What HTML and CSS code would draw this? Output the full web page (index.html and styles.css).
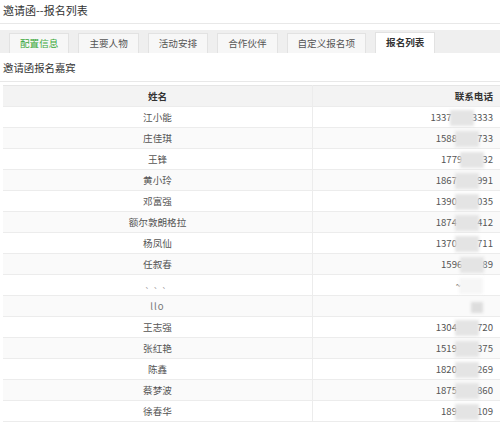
FILE: index.html
```html
<!DOCTYPE html>
<html lang="zh-CN">
<head>
  <meta charset="UTF-8">
  <meta name="viewport" content="width=device-width, initial-scale=1.0">
  <title>邀请函--报名列表</title>
  <link rel="stylesheet" href="styles.css">
</head>
<body>
  <div class="title">邀请函--报名列表</div>

  <!-- 选项卡 -->
  <div class="tabs">
    <div class="tab green">配置信息</div>
    <div class="tab">主要人物</div>
    <div class="tab">活动安排</div>
    <div class="tab">合作伙伴</div>
    <div class="tab">自定义报名项</div>
    <div class="tab active">报名列表</div>
  </div>

  <div class="subtitle">邀请函报名嘉宾</div>

  <table class="list">
    <thead>
      <tr><th class="name">姓名</th><th class="phone">联系电话</th></tr>
    </thead>
    <tbody>
      <tr><td class="name">江小能</td><td class="phone">1337<span class="mask"></span>3333</td></tr>
      <tr><td class="name">庄佳琪</td><td class="phone">1588<span class="mask"></span>733</td></tr>
      <tr><td class="name">王锋</td><td class="phone">1779<span class="mask"></span>32</td></tr>
      <tr><td class="name">黄小玲</td><td class="phone">1867<span class="mask"></span>991</td></tr>
      <tr><td class="name">邓富强</td><td class="phone">1390<span class="mask"></span>035</td></tr>
      <tr><td class="name">额尔敦朗格拉</td><td class="phone">1874<span class="mask"></span>412</td></tr>
      <tr><td class="name">杨凤仙</td><td class="phone">1370<span class="mask"></span>711</td></tr>
      <tr><td class="name">任叙春</td><td class="phone">1596<span class="mask"></span>89</td></tr>
      <tr><td class="name dots">、 、 、</td><td class="phone">~<span class="mask light"></span><span class="gap"></span></td></tr>
      <tr><td class="name thin">llo</td><td class="phone"><span class="mask small"></span><span class="gap"></span></td></tr>
      <tr><td class="name">王志强</td><td class="phone">1304<span class="mask"></span>720</td></tr>
      <tr><td class="name">张红艳</td><td class="phone">1519<span class="mask"></span>375</td></tr>
      <tr><td class="name">陈鑫</td><td class="phone">1820<span class="mask"></span>269</td></tr>
      <tr><td class="name">蔡梦波</td><td class="phone">1875<span class="mask"></span>860</td></tr>
      <tr><td class="name">徐春华</td><td class="phone">189<span class="mask"></span>109</td></tr>
    </tbody>
  </table>
</body>
</html>
```

FILE: styles.css
```css
body {
  margin: 0;
  font-family: "Noto Sans CJK SC", "Microsoft YaHei", sans-serif;
  font-size: 9.6px;
  color: #555;
  background: #fff;
  overflow: hidden;
}
.title {
  height: 23px;
  line-height: 20px;
  padding-left: 3px;
  font-size: 11px;
  color: #333;
  border-bottom: 1px solid #e8e8e8;
}
/* barra delle schede */
.tabs {
  display: flex;
  align-items: flex-end;
  gap: 9px;
  margin-top: 6px;
  height: 23px;
  padding-left: 9px;
  background: #efefef;
}
.tab {
  height: 19px;
  line-height: 19px;
  padding: 0 10px;
  background: #f7f7f7;
  border: 1px solid #e2e2e2;
  border-bottom: none;
  color: #555;
}
.tab.green {
  color: #3aa83a;
}
.tab.active {
  height: 20px;
  background: #fff;
  color: #333;
  font-weight: bold;
}
.subtitle {
  height: 28px;
  line-height: 29px;
  padding-left: 3px;
  font-size: 10.4px;
  color: #333;
  border-bottom: 1px solid #e8e8e8;
}
.list {
  margin: 3px 0 0 3px;
  width: 497px;
  border-collapse: collapse;
}
.list th, .list td {
  height: 20px;
  padding: 0;
  border-bottom: 1px solid #ececec;
  line-height: 20px;
  white-space: nowrap;
}
.list th {
  background: #f3f3f3;
  color: #333;
  font-weight: bold;
  border-top: 1px solid #e6e6e6;
}
.list .name {
  width: 309px;
  text-align: center;
  border-right: 1px solid #ececec;
}
.list .phone {
  text-align: right;
  padding-right: 7px;
}
.list tbody tr:nth-child(even) td {
  background: #fafafa;
}
.dots {
  color: #999;
  font-size: 7px;
}
.thin {
  color: #777;
  letter-spacing: 1px;
}
/* zona sfocata del numero */
.mask {
  display: inline-block;
  width: 24px;
  height: 16px;
  margin: 0 -2px;
  vertical-align: middle;
  background: #e4e4e4;
  filter: blur(1.5px);
}
.mask.light {
  background: #f6f6f6;
}
.mask.small {
  width: 12px;
  height: 11px;
  background: #ddd;
}
.gap {
  display: inline-block;
  width: 12px;
}
```
